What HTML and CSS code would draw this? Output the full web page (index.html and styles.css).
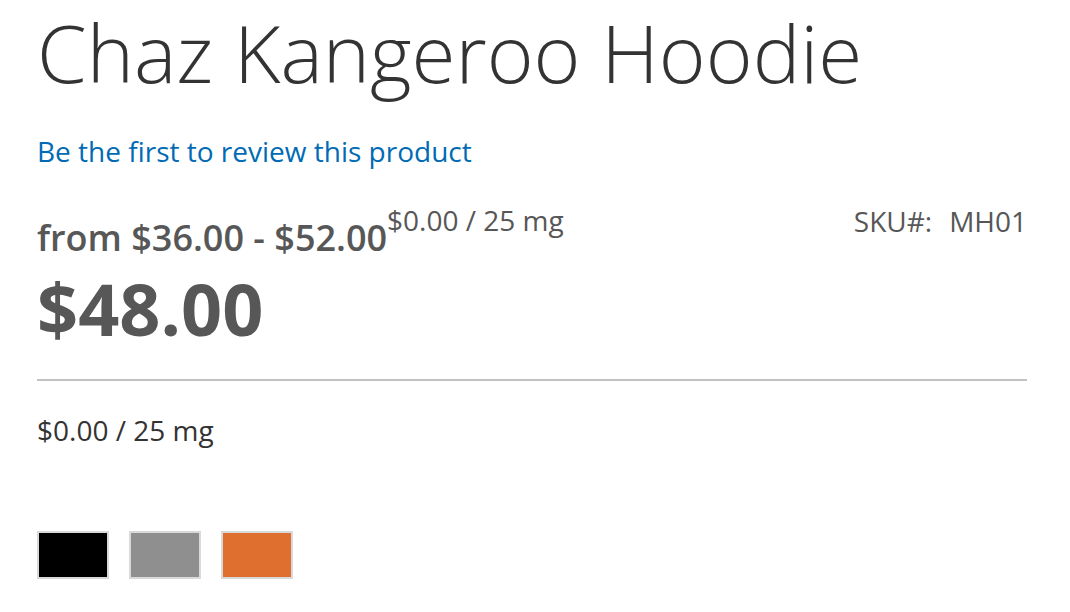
FILE: index.html
```html
<!DOCTYPE html>
<html>
<head>
<meta charset="utf-8">
<link rel="stylesheet" href="styles.css">
</head>
<body>
<div class="product">
  <h1 class="title">Chaz Kangeroo Hoodie</h1>
  <a class="review" href="#">Be the first to review this product</a>
  <div class="info">
    <div class="prices">
      <div class="range"><span class="from">from $36.00 - $52.00</span><sup class="unit">$0.00 / 25 mg</sup></div>
      <div class="final">$48.00</div>
    </div>
    <div class="sku"><span>SKU#:</span><span>MH01</span></div>
  </div>
  <div class="unit-price">$0.00 / 25 mg</div>
  <div class="swatches">
    <span class="swatch black"></span>
    <span class="swatch gray"></span>
    <span class="swatch orange"></span>
  </div>
</div>
</body>
</html>
```

FILE: styles.css
```css
html, body {
  margin: 0;
  background: #fff;
}
body {
  font-family: "Open Sans", "Liberation Sans", sans-serif;
  color: #333;
}
.product {
  padding: 0 43px 0 37px;
}
.title {
  margin: 0;
  font-size: 80px;
  font-weight: 300;
  line-height: 104px;
  color: #333;
}
.review {
  display: block;
  margin-top: 27px;
  font-size: 28px;
  line-height: 40px;
  color: #006bb4;
  text-decoration: none;
}
.info {
  display: flex;
  justify-content: space-between;
  align-items: flex-start;
  margin-top: 30px;
  padding-bottom: 31px;
  border-bottom: 2px solid #c2c2c2;
}
.prices {
  padding-top: 12px;
}
.range {
  font-size: 36px;
  font-weight: 600;
  line-height: 50px;
  color: #575757;
}
.unit {
  font-size: 28px;
  font-weight: 400;
  color: #575757;
  vertical-align: 20px;
  line-height: 0;
}
.final {
  margin-top: 5px;
  font-size: 72px;
  font-weight: 700;
  color: #575757;
  line-height: 80px;
}
.sku {
  display: flex;
  gap: 17px;
  font-size: 28px;
  color: #575757;
  line-height: 40px;
}
.unit-price {
  margin-top: 29px;
  font-size: 28px;
  line-height: 40px;
  color: #333;
}
.swatches {
  display: flex;
  gap: 20px;
  margin-top: 81px;
}
.swatch {
  width: 68px;
  height: 44px;
  border: 2px solid #d9d9d9;
}
.black { background: #000; }
.gray { background: #8f8f8f; }
.orange { background: #de6f2f; }
```
